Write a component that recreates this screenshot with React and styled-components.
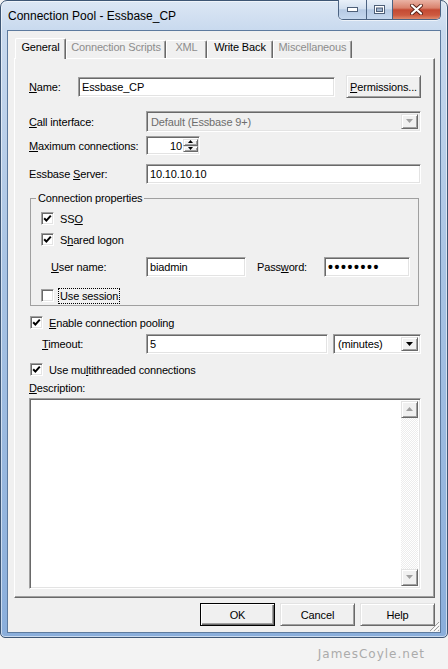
import React from "react";
import styled, { createGlobalStyle } from "styled-components";

const GlobalStyle = createGlobalStyle`
	html, body {
		margin: 0;
		padding: 0;
		background: #f3f3f3;
	}
	body {
		font-family: "Liberation Sans", Arial, sans-serif;
		font-size: 11px;
		color: #000;
	}
`;

const Page = styled.div`
	width: 448px;
	height: 669px;
	display: flex;
	flex-direction: column;
	background: #f3f3f3;
`;

const Window = styled.div`
	box-sizing: border-box;
	width: 448px;
	height: 638px;
	border: 1px solid #3e5674;
	border-radius: 7px 7px 5px 5px;
	background: linear-gradient(180deg, #dce7f4 0px, #c8d9ee 30px, #a9c4e4 260px, #8aaedb 638px);
	box-shadow: inset 0 0 0 1px rgba(255, 255, 255, 0.55);
	display: flex;
	flex-direction: column;
	padding: 0 6px 4px;
`;

const TitleBar = styled.div`
	height: 29px;
	display: flex;
	align-items: center;
`;

const Title = styled.span`
	margin-left: 1px;
	font-size: 12px;
	color: #000;
`;

const CaptionGroup = styled.div`
	display: flex;
	align-self: flex-start;
	margin-left: auto;
	margin-top: -1px;
	height: 19px;
	border: 1px solid #4c6382;
	border-top: none;
	border-radius: 0 0 5px 5px;
	overflow: hidden;
	box-shadow: 0 1px 0 rgba(255, 255, 255, 0.6);
`;

const CaptionButton = styled.div`
	width: ${(p) => p.$w}px;
	height: 100%;
	display: flex;
	align-items: center;
	justify-content: center;
	background: ${(p) =>
		p.$close
			? "linear-gradient(180deg, #eab3a5 0%, #d9826d 42%, #c44a33 52%, #cd5a40 80%, #df8a6c 100%)"
			: "linear-gradient(180deg, #e9f0f9 0%, #d2dfef 45%, #b6cae4 52%, #c5d7ee 100%)"};
	& + & {
		border-left: 1px solid #4c6382;
	}
`;

const Client = styled.div`
	position: relative;
	flex: 1;
	box-sizing: border-box;
	border: 1px solid #5d7a9e;
	background: #f0f0f0;
	display: flex;
	flex-direction: column;
	padding: 7px 5px 0 6px;
	letter-spacing: -0.15px;
`;

const TabStrip = styled.div`
	height: 20px;
	display: flex;
	align-items: flex-end;
	padding-left: 1px;
`;

const Tab = styled.div`
	box-sizing: border-box;
	position: relative;
	z-index: 1;
	width: ${(p) => p.$w}px;
	height: ${(p) => (p.$active ? 21 : 18)}px;
	margin-bottom: ${(p) => (p.$active ? -1 : 0)}px;
	padding-top: ${(p) => (p.$active ? 2 : 0)}px;
	background: #f0f0f0;
	border-top: 1px solid #fff;
	border-left: 1px solid #fff;
	border-right: 1px solid #696969;
	border-radius: 2px 2px 0 0;
	box-shadow: inset -1px 0 0 #a0a0a0;
	line-height: 13px;
	text-align: center;
	color: ${(p) => (p.$disabled ? "#8d8d8d" : "#000")};
	white-space: nowrap;
`;

const Panel = styled.div`
	box-sizing: border-box;
	height: 540px;
	border: 1px solid;
	border-color: #fff #696969 #696969 #fff;
	box-shadow: inset -1px -1px 0 #a0a0a0;
	display: flex;
	flex-direction: column;
	padding: 16px 13px 8px 14px;
`;

const Row = styled.div`
	display: flex;
	align-items: center;
	flex-shrink: 0;
	height: ${(p) => p.$h}px;
	margin-top: ${(p) => p.$mt || 0}px;
	padding-left: ${(p) => p.$pl || 0}px;
`;

const Label = styled.span`
	width: ${(p) => p.$w}px;
	margin-left: ${(p) => p.$ml || 0}px;
	flex-shrink: 0;
	white-space: nowrap;
`;

const Key = styled.span`
	text-decoration: underline;
`;

const Spacer = styled.div`
	flex: 1;
`;

const sunken = `
	box-sizing: border-box;
	border: 1px solid;
	border-color: #a0a0a0 #fff #fff #a0a0a0;
	box-shadow: inset 1px 1px 0 #696969, inset -1px -1px 0 #e3e3e3;
`;

const raised = `
	box-sizing: border-box;
	background: #f0f0f0;
	border: 1px solid;
	border-color: #e3e3e3 #696969 #696969 #e3e3e3;
	box-shadow: inset 1px 1px 0 #fff, inset -1px -1px 0 #a0a0a0;
`;

const TextInput = styled.div`
	${sunken}
	width: ${(p) => p.$w}px;
	height: 20px;
	background: #fff;
	padding: 0 3px;
	display: flex;
	align-items: center;
	white-space: nowrap;
	overflow: hidden;
`;

const Dots = styled.span`
	font-size: 14px;
	font-weight: bold;
	letter-spacing: 1.6px;
	line-height: 1;
`;

const PushButton = styled.div`
	${raised}
	width: ${(p) => p.$w}px;
	height: 23px;
	display: flex;
	align-items: center;
	justify-content: center;
	${(p) =>
		p.$default &&
		`
		border-color: #000;
		box-shadow: inset 1px 1px 0 #fff, inset -1px -1px 0 #696969, inset -2px -2px 0 #a0a0a0;
	`}
`;

const Combo = styled.div`
	${sunken}
	width: ${(p) => p.$w}px;
	height: ${(p) => p.$h}px;
	margin-left: ${(p) => p.$ml || 0}px;
	background: ${(p) => (p.$disabled ? "#f0f0f0" : "#fff")};
	color: ${(p) => (p.$disabled ? "#6d6d6d" : "#000")};
	display: flex;
	align-items: center;
	padding: 2px 2px 2px 4px;
`;

const ComboText = styled.span`
	flex: 1;
	white-space: nowrap;
`;

const DropButton = styled.div`
	${raised}
	width: 17px;
	height: 100%;
	display: flex;
	align-items: center;
	justify-content: center;
`;

const Spinner = styled.div`
	${sunken}
	width: 54px;
	height: 19px;
	background: #fff;
	display: flex;
	padding: 2px 1px 2px 2px;
`;

const SpinValue = styled.span`
	flex: 1;
	text-align: right;
	line-height: 15px;
	padding-right: 1px;
`;

const SpinButtons = styled.div`
	width: 15px;
	display: flex;
	flex-direction: column;
`;

const SpinButton = styled.div`
	${raised}
	flex: 1;
	display: flex;
	align-items: center;
	justify-content: center;
`;

const Group = styled.fieldset`
	box-sizing: border-box;
	min-width: 0;
	width: 389px;
	margin: 8px 0 0 1px;
	padding: 6px 0 2px 0;
	border: 1px solid #a0a0a0;
	flex-shrink: 0;
`;

const Legend = styled.legend`
	margin-left: 5px;
	padding: 0 2px;
	line-height: 13px;
`;

const Box = styled.span`
	${sunken}
	width: 13px;
	height: 13px;
	flex-shrink: 0;
	background: #fff;
	display: flex;
	align-items: center;
	justify-content: center;
	margin-right: 6px;
`;

const FocusText = styled.span`
	outline: 1px dotted #000;
	outline-offset: 0;
	padding: 0 1px;
	line-height: 14px;
	margin-left: -1px;
`;

const TextArea = styled.div`
	${sunken}
	flex: 1;
	margin-top: 4px;
	background: #fff;
	display: flex;
	justify-content: flex-end;
	padding: 2px;
`;

const ScrollBar = styled.div`
	width: 17px;
	display: flex;
	flex-direction: column;
`;

const ScrollButton = styled.div`
	${raised}
	height: 17px;
	display: flex;
	align-items: center;
	justify-content: center;
`;

const ScrollTrack = styled.div`
	flex: 1;
	background: repeating-conic-gradient(#fff 0 25%, #ececec 0 50%) 0 0 / 2px 2px;
`;

const ButtonRow = styled.div`
	display: flex;
	justify-content: flex-end;
	gap: 5px;
	margin-top: 5px;
`;

const Grip = styled.svg`
	position: absolute;
	right: 0;
	bottom: 0;
`;

const Footer = styled.div`
	flex: 1;
	display: flex;
	align-items: center;
	justify-content: flex-end;
	padding-right: 23px;
	font-family: "DejaVu Sans", Verdana, sans-serif;
	font-size: 12px;
	letter-spacing: 1px;
	color: #ababab;
`;

const Arrow = ({ up, color = "#000", w = 7 }) => {
	const h = Math.ceil(w / 2);
	return (
		<svg width={w} height={h + 1} viewBox={`0 0 ${w} ${h + 1}`}>
			<polygon points={up ? `0,${h} ${w},${h} ${w / 2},0` : `0,0 ${w},0 ${w / 2},${h}`} fill={color} />
		</svg>
	);
};

const Check = () => (
	<svg width="9" height="9" viewBox="0 0 9 9">
		<path d="M1.2 4.2 L3.4 6.6 L7.8 1.6" fill="none" stroke="#000" strokeWidth="2" />
	</svg>
);

const CheckBox = ({ checked }) => <Box>{checked && <Check />}</Box>;

const Dialog = () => {
	return (
		<Window>
			<TitleBar>
				<Title>Connection Pool - Essbase_CP</Title>
				<CaptionGroup>
					<CaptionButton $w={27}>
						<svg width="11" height="5" viewBox="0 0 11 5">
							<rect x="0.5" y="0.5" width="10" height="4" fill="#fff" stroke="#4e5f78" />
						</svg>
					</CaptionButton>
					<CaptionButton $w={25}>
						<svg width="11" height="9" viewBox="0 0 11 9">
							<rect x="0.5" y="0.5" width="10" height="8" fill="#fff" stroke="#4e5f78" />
							<rect x="2.5" y="3" width="6" height="3.5" fill="#9fb3cd" stroke="#4e5f78" />
						</svg>
					</CaptionButton>
					<CaptionButton $w={47} $close>
						<svg width="13" height="11" viewBox="0 0 13 11">
							<path d="M2 1.5 L11 9.5 M11 1.5 L2 9.5" stroke="#5a2318" strokeWidth="4" strokeLinecap="round" />
							<path d="M2 1.5 L11 9.5 M11 1.5 L2 9.5" stroke="#fff" strokeWidth="2.2" strokeLinecap="round" />
						</svg>
					</CaptionButton>
				</CaptionGroup>
			</TitleBar>

			<Client>
				<TabStrip>
					<Tab $w={51} $active>General</Tab>
					<Tab $w={100} $disabled>Connection Scripts</Tab>
					<Tab $w={41} $disabled>XML</Tab>
					<Tab $w={66}>Write Back</Tab>
					<Tab $w={79} $disabled>Miscellaneous</Tab>
				</TabStrip>

				<Panel>
					<Row $h={23}>
						<Label $w={49}>
							<Key>N</Key>ame:
						</Label>
						<TextInput $w={257}>Essbase_CP</TextInput>
						<Spacer />
						<PushButton $w={75}>
							<span>
								<Key>P</Key>ermissions...
							</span>
						</PushButton>
					</Row>

					<Row $h={21} $mt={13}>
						<Label $w={117}>
							<Key>C</Key>all interface:
						</Label>
						<Combo $w={275} $h={21} $disabled>
							<ComboText>Default (Essbase 9+)</ComboText>
							<DropButton>
								<Arrow color="#a0a0a0" />
							</DropButton>
						</Combo>
					</Row>

					<Row $h={19} $mt={4}>
						<Label $w={117}>
							<Key>M</Key>aximum connections:
						</Label>
						<Spinner>
							<SpinValue>10</SpinValue>
							<SpinButtons>
								<SpinButton>
									<Arrow up w={5} />
								</SpinButton>
								<SpinButton>
									<Arrow w={5} />
								</SpinButton>
							</SpinButtons>
						</Spinner>
					</Row>

					<Row $h={20} $mt={9}>
						<Label $w={117}>
							Essbase <Key>S</Key>erver:
						</Label>
						<TextInput $w={275}>10.10.10.10</TextInput>
					</Row>

					<Group>
						<Legend>Connection properties</Legend>
						<Row $h={15} $pl={10}>
							<CheckBox checked />
							<span>
								SS<Key>O</Key>
							</span>
						</Row>
						<Row $h={15} $mt={6} $pl={10}>
							<CheckBox checked />
							<span>
								S<Key>h</Key>ared logon
							</span>
						</Row>
						<Row $h={20} $mt={10} $pl={20}>
							<Label $w={95}>
								<Key>U</Key>ser name:
							</Label>
							<TextInput $w={100}>biadmin</TextInput>
							<Label $w={67} $ml={11}>
								Pass<Key>w</Key>ord:
							</Label>
							<TextInput $w={86}>
								<Dots>••••••••</Dots>
							</TextInput>
						</Row>
						<Row $h={15} $mt={11} $pl={10}>
							<CheckBox />
							<FocusText>Use session</FocusText>
						</Row>
					</Group>

					<Row $h={15} $mt={9} $pl={1}>
						<CheckBox checked />
						<span>
							<Key>E</Key>nable connection pooling
						</span>
					</Row>

					<Row $h={20} $mt={4} $pl={13}>
						<Label $w={104}>
							<Key>T</Key>imeout:
						</Label>
						<TextInput $w={182}>5</TextInput>
						<Combo $w={88} $h={20} $ml={5}>
							<ComboText>(minutes)</ComboText>
							<DropButton>
								<Arrow />
							</DropButton>
						</Combo>
					</Row>

					<Row $h={15} $mt={8} $pl={1}>
						<CheckBox checked />
						<span>
							Use mu<Key>l</Key>tithreaded connections
						</span>
					</Row>

					<Row $h={13} $mt={4}>
						<span>
							<Key>D</Key>escription:
						</span>
					</Row>

					<TextArea>
						<ScrollBar>
							<ScrollButton>
								<Arrow up color="#a0a0a0" />
							</ScrollButton>
							<ScrollTrack />
							<ScrollButton>
								<Arrow color="#a0a0a0" />
							</ScrollButton>
						</ScrollBar>
					</TextArea>
				</Panel>

				<ButtonRow>
					<PushButton $w={75} $default>
						OK
					</PushButton>
					<PushButton $w={75}>Cancel</PushButton>
					<PushButton $w={75}>Help</PushButton>
				</ButtonRow>

				<Grip width="12" height="12" viewBox="0 0 12 12">
					<path d="M11 2 L2 11 M11 6 L6 11 M11 10 L10 11" stroke="#a0a0a0" strokeWidth="1" />
					<path d="M12 3 L3 12 M12 7 L7 12" stroke="#fff" strokeWidth="1" />
				</Grip>
			</Client>
		</Window>
	);
};

const App = () => {
	return (
		<Page>
			<GlobalStyle />
			<Dialog />
			<Footer>JamesCoyle.net</Footer>
		</Page>
	);
};

export default App;
